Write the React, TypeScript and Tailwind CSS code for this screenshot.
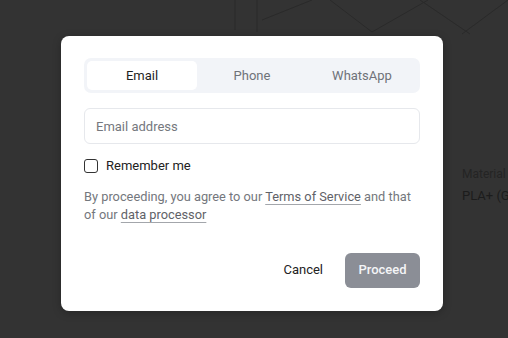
import { useState } from "react";

const TABS = ["Email", "Phone", "WhatsApp"];

export default function App() {
  const [tab, setTab] = useState("Email");
  const [remember, setRemember] = useState(false);

  return (
    <div className="relative h-[338px] w-[508px] overflow-hidden bg-[#333333] font-['Roboto',sans-serif]">
      {/* page behind the overlay */}
      <svg
        className="absolute left-0 top-0"
        width="508"
        height="40"
        viewBox="0 0 508 40"
        fill="none"
        stroke="#2a2a2a"
        strokeWidth="1"
      >
        <path d="M235 0V30M257 0V32" />
        <path d="M262 20L312 0M330 0L372 32M372 32L428 0M420 0L470 34M462 34L508 0" />
      </svg>
      <div className="absolute left-[462px] top-[166px] flex flex-col gap-[6px] whitespace-nowrap text-[12px] leading-[16px]">
        <span className="text-[#242424]">Material</span>
        <span className="text-[13px] text-[#1c1c1c]">PLA+ (G</span>
      </div>

      {/* dialog */}
      <div className="absolute left-[61px] top-[36px] flex w-[382px] flex-col rounded-[8px] bg-white px-[23px] pb-[23px] pt-[22px] shadow-[0_2px_8px_rgba(0,0,0,0.25)]">
        <div className="flex h-[35px] rounded-[7px] bg-[#f2f4f8] p-[3px]">
          {TABS.map((t) => (
            <button
              key={t}
              onClick={() => setTab(t)}
              className={`flex flex-1 items-center justify-center rounded-[5px] text-[13px] ${
                tab === t ? "bg-white text-[#1f1f1f]" : "text-[#6f7278]"
              }`}
            >
              {t}
            </button>
          ))}
        </div>

        <input
          placeholder="Email address"
          className="mt-[15px] h-[36px] w-full rounded-[6px] border border-[#e6e8ec] px-[11px] text-[13px] text-[#1f1f1f] outline-none placeholder:text-[#75787e]"
        />

        <label className="mt-[12px] flex items-center gap-[8px] text-[13px] text-[#222]">
          <span
            onClick={() => setRemember(!remember)}
            className={`h-[14px] w-[14px] rounded-[3px] border-[1.5px] border-[#333] ${
              remember ? "bg-[#333]" : "bg-white"
            }`}
          />
          Remember me
        </label>

        <p className="mt-[12px] text-[12.8px] leading-[18px] text-[#74777d]">
          By proceeding, you agree to our{" "}
          <a className="text-[#5f6268] underline decoration-[#a3a6ab] underline-offset-[3px]">
            Terms of Service
          </a>{" "}
          and that of our{" "}
          <a className="text-[#5f6268] underline decoration-[#a3a6ab] underline-offset-[3px]">
            data processor
          </a>
        </p>

        <div className="mt-[29px] flex items-center justify-end gap-[10px]">
          <button className="h-[35px] px-[12px] text-[13px] text-[#222]">Cancel</button>
          <button className="h-[35px] w-[75px] rounded-[6px] bg-[#8b8e96] text-[13px] font-medium text-[#f4f5f7]">
            Proceed
          </button>
        </div>
      </div>
    </div>
  );
}
